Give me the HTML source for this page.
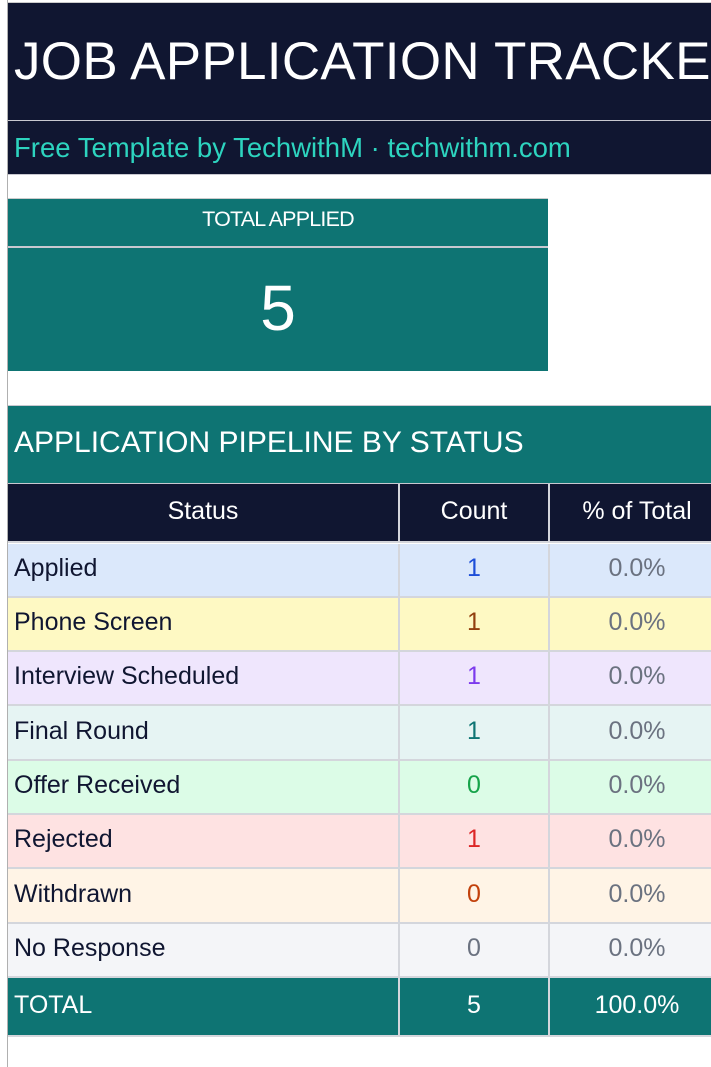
<!DOCTYPE html>
<html><head><style>
*{margin:0;padding:0;box-sizing:border-box}
html,body{width:711px;height:1067px;overflow:hidden}
body{background:#fff;font-family:"Liberation Sans",Arial,sans-serif;position:relative}
.a{position:absolute;display:flex;align-items:center;white-space:nowrap;overflow:hidden}
.lb{position:absolute;left:7px;top:0;width:1px;height:1067px;background:#b0b0b0}
.c{justify-content:center}
</style></head><body>
<div class="lb"></div>
<div class="a" style="left:8px;top:2px;width:703px;height:118px;background:#101631;color:#fff;font-size:53px;padding-left:6px;border-top:1px solid #ccc;letter-spacing:0.3px">JOB APPLICATION TRACKER</div>
<div style="position:absolute;left:8px;top:120px;width:703px;height:1px;background:#c8c8d0"></div>
<div class="a" style="left:8px;top:121px;width:703px;height:53px;background:#101631;color:#2dd4bf;font-size:27.5px;padding-left:6px">Free Template by TechwithM · techwithm.com</div>
<div style="position:absolute;left:8px;top:174px;width:703px;height:1px;background:#c8c8d0"></div>
<div class="a c" style="left:8px;top:198px;width:540px;height:48px;background:#0e7473;color:#fff;font-size:21.5px;letter-spacing:-0.8px;border-top:1px solid #ccc;padding-bottom:6px">TOTAL APPLIED</div>
<div style="position:absolute;left:8px;top:246px;width:540px;height:2px;background:#c8c8d0"></div>
<div class="a c" style="left:8px;top:248px;width:540px;height:123px;background:#0e7473;color:#fff;font-size:64px;padding-bottom:4px">5</div>
<div style="position:absolute;left:8px;top:405px;width:703px;height:1px;background:#c8c8d0"></div>
<div class="a" style="left:8px;top:406px;width:703px;height:77px;background:#0e7473;color:#fff;font-size:30px;padding-left:6px;padding-bottom:4px">APPLICATION PIPELINE BY STATUS</div>
<div style="position:absolute;left:8px;top:483px;width:703px;height:1px;background:#c8c8d0"></div>
<div id="t"></div>
<script>
var rows=[
["Status","Count","% of Total","#101631","#fff","#fff","#fff",484,59,1],
["Applied","1","0.0%","#dbe8fb","#101631","#1d4ed8","#6b7280",544,54],
["Phone Screen","1","0.0%","#fef9c3","#101631","#92400e","#6b7280",598,54],
["Interview Scheduled","1","0.0%","#efe6fd","#101631","#7c3aed","#6b7280",652,54],
["Final Round","1","0.0%","#e6f4f3","#101631","#0e7473","#6b7280",706,55],
["Offer Received","0","0.0%","#dcfce7","#101631","#16a34a","#6b7280",761,54],
["Rejected","1","0.0%","#fee2e2","#101631","#dc2626","#6b7280",815,54],
["Withdrawn","0","0.0%","#fff4e6","#101631","#c2410c","#6b7280",869,55],
["No Response","0","0.0%","#f4f5f8","#101631","#6b7280","#6b7280",924,54],
["TOTAL","5","100.0%","#0e7473","#fff","#fff","#fff",978,59]];
var h="";
rows.forEach(function(r){
var hd=r[9];
var st='font-size:25px;padding-bottom:3px;';
h+='<div class="a'+(hd?' c':'')+'" style="left:8px;top:'+r[7]+'px;width:390px;height:'+r[8]+'px;background:'+r[3]+';color:'+r[4]+';'+st+(hd?'':'padding-left:6px;')+'border-bottom:2px solid #d4d6dc">'+r[0]+'</div>';
h+='<div class="a c" style="left:398px;top:'+r[7]+'px;width:150px;height:'+r[8]+'px;background:'+r[3]+';color:'+r[5]+';'+st+'border-left:2px solid #d4d6dc;border-bottom:2px solid #d4d6dc">'+r[1]+'</div>';
h+='<div class="a c" style="left:548px;top:'+r[7]+'px;width:163px;height:'+r[8]+'px;background:'+r[3]+';color:'+r[6]+';'+st+'border-left:2px solid #d4d6dc;border-bottom:2px solid #d4d6dc;padding-left:13px">'+r[2]+'</div>';
});
document.getElementById("t").innerHTML=h;
</script>
</body></html>
